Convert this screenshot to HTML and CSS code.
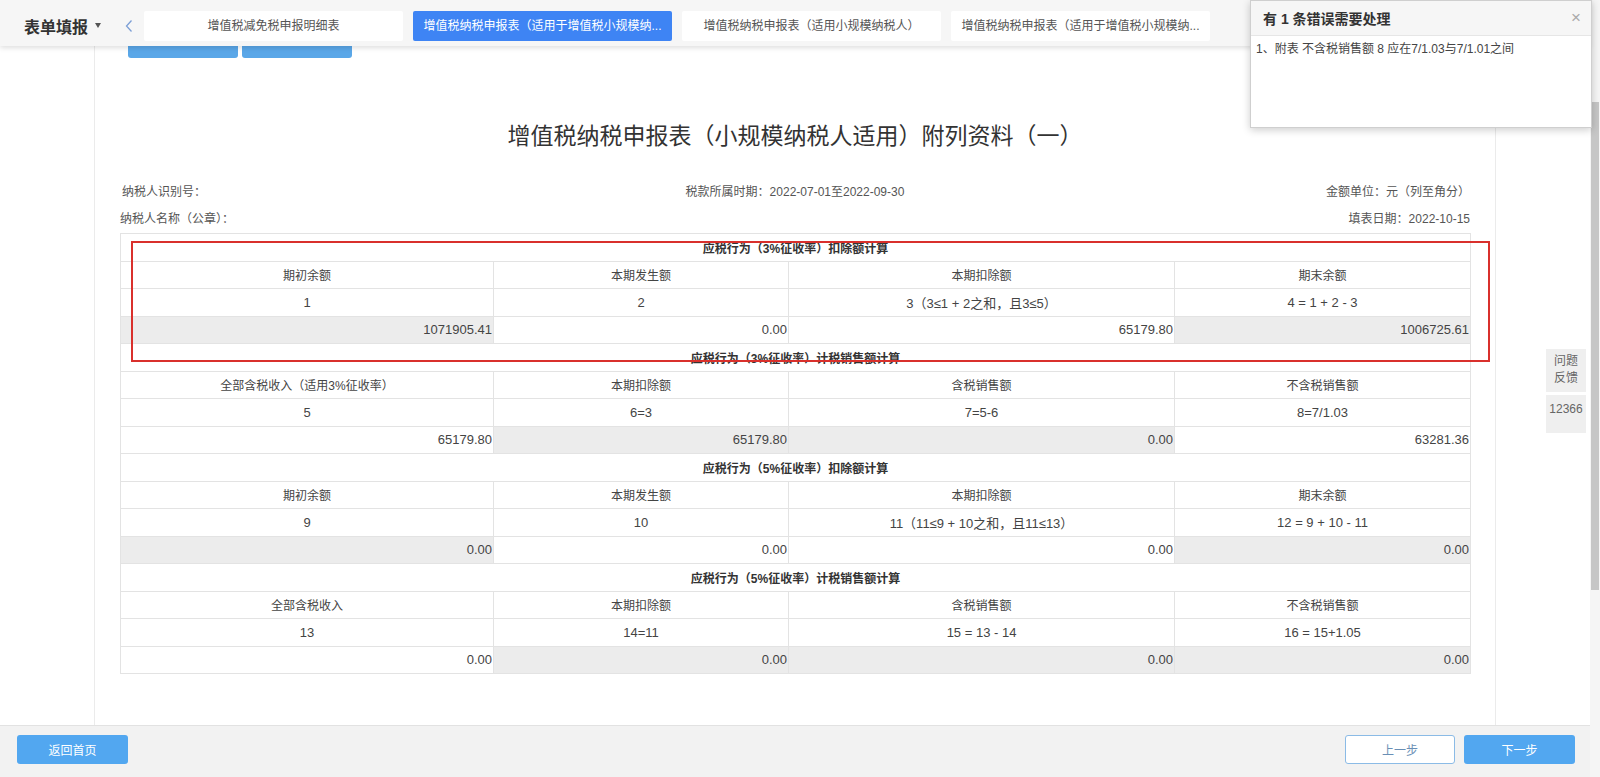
FILE: index.html
```html
<!DOCTYPE html>
<html lang="zh-CN">
<head>
<meta charset="utf-8">
<title>表单填报</title>
<link rel="stylesheet" href="styles.css">
</head>
<body>
<div class="app">
  <div class="content">
    <header class="topbar">
      <div class="brand">表单填报<span class="caret"></span></div>
      <span class="prev"><svg width="8" height="14" viewBox="0 0 8 14"><path d="M6.5 1.5 L1.5 7 L6.5 12.5" fill="none" stroke="#7c9fd6" stroke-width="1.3"/></svg></span>
      <nav class="tabs">
        <div class="tab">增值税减免税申报明细表</div>
        <div class="tab active" title="增值税纳税申报表（适用于增值税小规模纳税人）附列资料（一）">增值税纳税申报表（适用于增值税小规模纳...</div>
        <div class="tab">增值税纳税申报表（适用小规模纳税人）</div>
        <div class="tab" title="增值税纳税申报表（适用于增值税小规模纳税人）附列资料（二）">增值税纳税申报表（适用于增值税小规模纳...</div>
      </nav>
    </header>
    <div class="main">
      <div class="gutter"></div>
      <section class="panel">
        <div class="actions"><span class="abtn"></span><span class="abtn"></span></div>
        <h1>增值税纳税申报表（小规模纳税人适用）附列资料（一）</h1>
        <div class="info">
          <div class="info-row">
            <span class="il first">纳税人识别号：</span>
            <span class="ic">税款所属时期：2022-07-01至2022-09-30</span>
            <span class="ir">金额单位：元（列至角分）</span>
          </div>
          <div class="info-row">
            <span class="il">纳税人名称（公章）：</span>
            <span class="ic"></span>
            <span class="ir">填表日期：2022-10-15</span>
          </div>
        </div>
        <table class="sheet">
          <colgroup><col class="c1"><col class="c2"><col class="c3"><col class="c4"></colgroup>
          <tbody>
            <tr><td colspan="4" class="sec">应税行为（3%征收率）扣除额计算</td></tr>
            <tr><td>期初余额</td><td>本期发生额</td><td>本期扣除额</td><td>期末余额</td></tr>
            <tr class="idx"><td>1</td><td>2</td><td>3（3≤1 + 2之和，且3≤5）</td><td>4 = 1 + 2 - 3</td></tr>
            <tr class="val"><td class="g">1071905.41</td><td>0.00</td><td>65179.80</td><td class="g">1006725.61</td></tr>
            <tr><td colspan="4" class="sec">应税行为（3%征收率）计税销售额计算</td></tr>
            <tr><td>全部含税收入（适用3%征收率）</td><td>本期扣除额</td><td>含税销售额</td><td>不含税销售额</td></tr>
            <tr class="idx"><td>5</td><td>6=3</td><td>7=5-6</td><td>8=7/1.03</td></tr>
            <tr class="val"><td>65179.80</td><td class="g">65179.80</td><td class="g">0.00</td><td>63281.36</td></tr>
            <tr><td colspan="4" class="sec">应税行为（5%征收率）扣除额计算</td></tr>
            <tr><td>期初余额</td><td>本期发生额</td><td>本期扣除额</td><td>期末余额</td></tr>
            <tr class="idx"><td>9</td><td>10</td><td>11（11≤9 + 10之和，且11≤13）</td><td>12 = 9 + 10 - 11</td></tr>
            <tr class="val"><td class="g">0.00</td><td>0.00</td><td>0.00</td><td class="g">0.00</td></tr>
            <tr><td colspan="4" class="sec">应税行为（5%征收率）计税销售额计算</td></tr>
            <tr><td>全部含税收入</td><td>本期扣除额</td><td>含税销售额</td><td>不含税销售额</td></tr>
            <tr class="idx"><td>13</td><td>14=11</td><td>15 = 13 - 14</td><td>16 = 15+1.05</td></tr>
            <tr class="val"><td>0.00</td><td class="g">0.00</td><td class="g">0.00</td><td class="g">0.00</td></tr>
          </tbody>
        </table>
        <div class="highlight"></div>
      </section>
      <aside class="side">
        <div class="fb">问题<br>反馈</div>
        <div class="fb num">12366</div>
      </aside>
    </div>
    <footer class="footer">
      <div class="btn primary">返回首页</div>
      <div class="spacer"></div>
      <div class="btn ghost">上一步</div>
      <div class="btn primary">下一步</div>
    </footer>
  </div>
  <div class="scrollbar"><div class="thumb"></div></div>
  <div class="popup">
    <div class="popup-head"><span>有 1 条错误需要处理</span><span class="close">×</span></div>
    <div class="popup-body">1、附表 不含税销售额 8 应在7/1.03与7/1.01之间</div>
  </div>
</div>
</body>
</html>
```

FILE: styles.css
```css
* { box-sizing: border-box; }
html, body { margin: 0; padding: 0; }
body {
  width: 1600px;
  height: 777px;
  overflow: hidden;
  background: #fff;
  color: #444;
  font-family: "Liberation Sans", "Noto Sans CJK SC", sans-serif;
  font-size: 12px;
}
.app { position: relative; display: flex; width: 1600px; height: 777px; }
.content { width: 1590px; flex: none; display: flex; flex-direction: column; }

/* top bar */
.topbar {
  position: relative;
  z-index: 2;
  flex: none;
  height: 46px;
  padding: 5px 0 0 24px;
  display: flex;
  align-items: center;
  background: #f6f6f6;
  box-shadow: 0 2px 5px rgba(0, 0, 0, 0.13);
}
.brand {
  display: flex;
  align-items: center;
  font-size: 16px;
  font-weight: bold;
  color: #333;
}
.caret {
  width: 0; height: 0;
  margin-left: 7px;
  border-left: 3.5px solid transparent;
  border-right: 3.5px solid transparent;
  border-top: 5px solid #555;
}
.prev { display: flex; margin-left: 24px; }
.tabs { display: flex; gap: 10px; margin-left: 11px; }
.tab {
  width: 259px;
  height: 30px;
  line-height: 30px;
  padding: 0 6px;
  background: #fff;
  color: #555;
  text-align: center;
  white-space: nowrap;
  overflow: hidden;
  border-radius: 2px;
}
.tab.active { background: #3e84f4; color: #fff; }

/* main */
.main { flex: 1; display: flex; min-height: 0; }
.gutter { width: 94px; flex: none; }
.panel {
  position: relative;
  width: 1402px;
  flex: none;
  padding: 0 25px;
  border-left: 1px solid #ebebeb;
  border-right: 1px solid #ebebeb;
}
.actions { display: flex; gap: 4px; margin-left: 8px; height: 12px; }
.abtn { width: 110px; height: 12px; background: #5aa7e8; border-radius: 0 0 3px 3px; }
h1 {
  margin: 62px 0 0;
  font-size: 23px;
  line-height: 32px;
  font-weight: normal;
  text-align: center;
  color: #333;
}
.info { margin-top: 25px; color: #555; }
.info-row {
  display: grid;
  grid-template-columns: 1fr auto 1fr;
  align-items: center;
  height: 27px;
}
.il { justify-self: start; }
.il.first { padding-left: 2px; }
.ir { justify-self: end; }

.sheet {
  width: 1350px;
  margin-top: 2px;
  border-collapse: collapse;
  table-layout: fixed;
  color: #444;
}
.c1 { width: 373px; }
.c2 { width: 295px; }
.c3 { width: 386px; }
.c4 { width: 296px; }
.sheet td {
  height: 27.5px;
  padding: 0 2px;
  border: 1px solid #e3e3e3;
  text-align: center;
  white-space: nowrap;
}
.sheet td.sec { font-weight: bold; color: #333; }
.sheet tr.idx td { font-size: 13px; }
.sheet tr.val td { text-align: right; font-size: 13px; padding-right: 1px; }
.sheet td.g { background: #ececec; }

.highlight {
  position: absolute;
  left: 36px;
  top: 195px;
  width: 1359px;
  height: 121px;
  border: 2px solid #d9302c;
  pointer-events: none;
}

/* side feedback */
.side { width: 94px; flex: none; padding: 303px 0 0 50px; }
.fb {
  width: 40px;
  padding: 4px 0 5px;
  background: #efefef;
  color: #666;
  text-align: center;
  line-height: 17px;
}
.fb.num { margin-top: 3px; height: 38px; padding-top: 6px; }

/* footer */
.footer {
  flex: none;
  height: 52px;
  display: flex;
  align-items: flex-start;
  gap: 9px;
  padding: 9px 15px 0 17px;
  background: #f2f2f2;
  border-top: 1px solid #e2e2e2;
}
.spacer { flex: 1; }
.btn {
  width: 111px;
  height: 29px;
  display: flex;
  align-items: center;
  justify-content: center;
  border-radius: 3px;
}
.btn.primary { background: #52a7f0; color: #fff; }
.btn.ghost { width: 110px; background: #fff; border: 1px solid #8bbbe6; color: #6a8fb5; }

/* scrollbar */
.scrollbar { width: 10px; flex: none; background: #f5f5f5; padding-top: 102px; }
.thumb { width: 8px; height: 488px; margin-left: 1px; background: #c6c6c6; }

/* error popup */
.popup {
  position: absolute;
  left: 1250px;
  top: 0;
  z-index: 10;
  width: 342px;
  height: 128px;
  background: #fff;
  border: 1px solid #cfcfcf;
  box-shadow: 0 2px 8px rgba(0, 0, 0, 0.2);
}
.popup-head {
  height: 35px;
  display: flex;
  align-items: center;
  justify-content: space-between;
  padding: 0 10px 0 12px;
  background: #f6f6f6;
  border-bottom: 1px solid #e6e6e6;
  font-size: 14px;
  font-weight: bold;
  color: #333;
}
.close { font-size: 17px; font-weight: normal; color: #aaa; }
.popup-body { padding: 5px 5px; line-height: 16px; color: #444; }
```
